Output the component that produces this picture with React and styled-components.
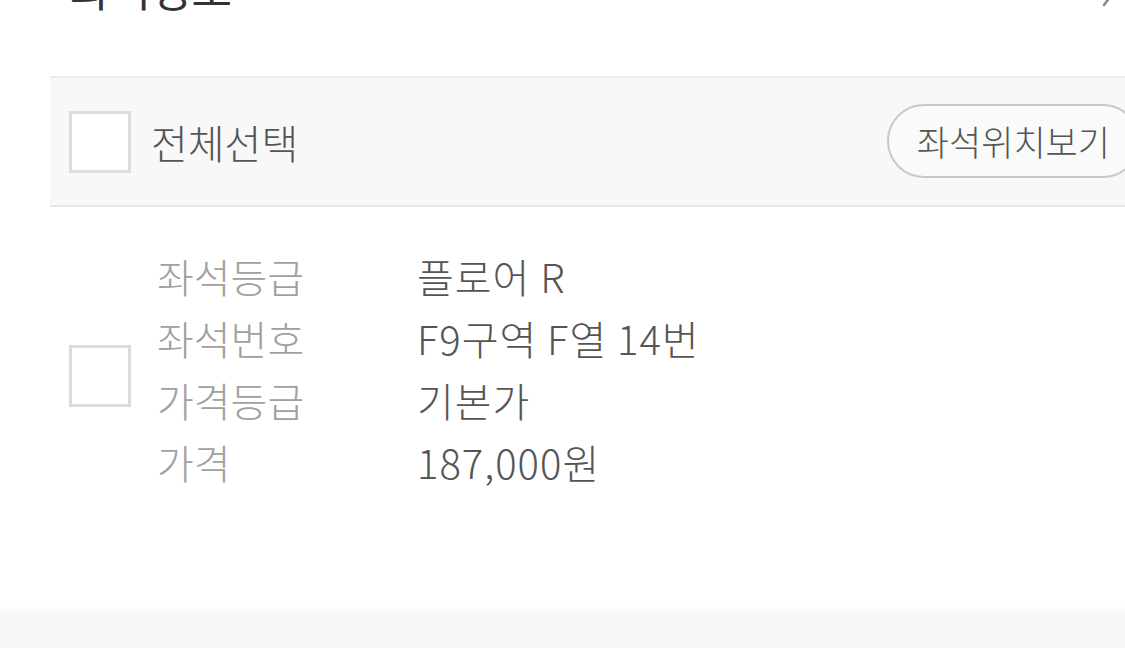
import React from "react";
import styled, { createGlobalStyle } from "styled-components";

const Global = createGlobalStyle`
  html, body { margin: 0; padding: 0; background: #ffffff; overflow: hidden; }
  body { font-family: "Noto Sans CJK KR", "Noto Sans", sans-serif; width: 1125px; height: 648px; }
  #root { width: 1125px; height: 648px; overflow: hidden; }
`;

const Screen = styled.div`
  display: flex;
  flex-direction: column;
  height: 648px;
  width: 1210px;
`;

const Content = styled.div`
  flex: 1;
  padding: 0 50px;
  display: flex;
  flex-direction: column;
`;

const TitleRow = styled.div`
  display: flex;
  justify-content: space-between;
  align-items: flex-start;
  margin-top: -34px;
  height: 110px;
  padding: 0 38px 0 20px;
`;

const Title = styled.h2`
  margin: 0;
  font-size: 44px;
  line-height: 1;
  font-weight: 400;
  color: #333;
`;

const Chevron = styled.svg`
  width: 22px;
  height: 40px;
  margin-top: 13px;
`;

const HeadBar = styled.div`
  display: flex;
  align-items: center;
  justify-content: space-between;
  height: 127px;
  background: #f8f8f8;
  border-top: 2px solid #ececec;
  border-bottom: 2px solid #e6e6e6;
  padding: 0 20px 0 19px;
`;

const CheckLabel = styled.label`
  display: flex;
  align-items: center;
  gap: 20px;
`;

const Box = styled.span`
  box-sizing: border-box;
  width: 62px;
  height: 62px;
  background: #fff;
  border: 3px solid #dcdcdc;
  display: block;
  flex: none;
`;

const HeadText = styled.span`
  font-size: 40px;
  font-weight: 300;
  color: #555;
  line-height: 1;
`;

const PillButton = styled.button`
  box-sizing: border-box;
  height: 74px;
  padding: 0 28px;
  border: 2px solid #c8c8c8;
  border-radius: 37px;
  background: #fafafa;
  font-family: "Noto Sans CJK KR", "Noto Sans", sans-serif;
  font-size: 35px;
  font-weight: 300;
  color: #555;
  line-height: 1;
  margin-top: -2px;
`;

const ItemRow = styled.div`
  display: flex;
  align-items: center;
  padding: 38px 0 0 19px;
  gap: 26px;
`;

const ItemBox = styled(Box)`
  margin-top: 14px;
`;

const Details = styled.dl`
  margin: 0;
  display: grid;
  grid-template-columns: 260px auto;
  grid-auto-rows: 62px;
  align-items: center;
`;

const Label = styled.dt`
  font-size: 40px;
  font-weight: 300;
  color: #a0a0a0;
  line-height: 1;
`;

const Value = styled.dd`
  margin: 0;
  font-size: 40px;
  font-weight: 300;
  letter-spacing: 1px;
  color: #555;
  line-height: 1;
`;

const BottomBand = styled.div`
  height: 41px;
  background: linear-gradient(#fdfdfd, #f8f8f8 8px);
`;

const rows = [
  ["좌석등급", "플로어 R"],
  ["좌석번호", "F9구역 F열 14번"],
  ["가격등급", "기본가"],
  ["가격", "187,000원"],
];

export default function App() {
  return (
    <>
      <Global />
      <Screen>
        <Content>
          <TitleRow>
            <Title>좌석정보</Title>
            <Chevron viewBox="0 0 22 40" fill="none">
              <path d="M4 -6 L16 10 L4 26" stroke="#888" strokeWidth="2.5" strokeLinecap="round" strokeLinejoin="round" />
            </Chevron>
          </TitleRow>
          <HeadBar>
            <CheckLabel>
              <Box />
              <HeadText>전체선택</HeadText>
            </CheckLabel>
            <PillButton>좌석위치보기</PillButton>
          </HeadBar>
          <ItemRow>
            <ItemBox />
            <Details>
              {rows.map(([k, v]) => (
                <React.Fragment key={k}>
                  <Label>{k}</Label>
                  <Value>{v}</Value>
                </React.Fragment>
              ))}
            </Details>
          </ItemRow>
        </Content>
        <BottomBand />
      </Screen>
    </>
  );
}
